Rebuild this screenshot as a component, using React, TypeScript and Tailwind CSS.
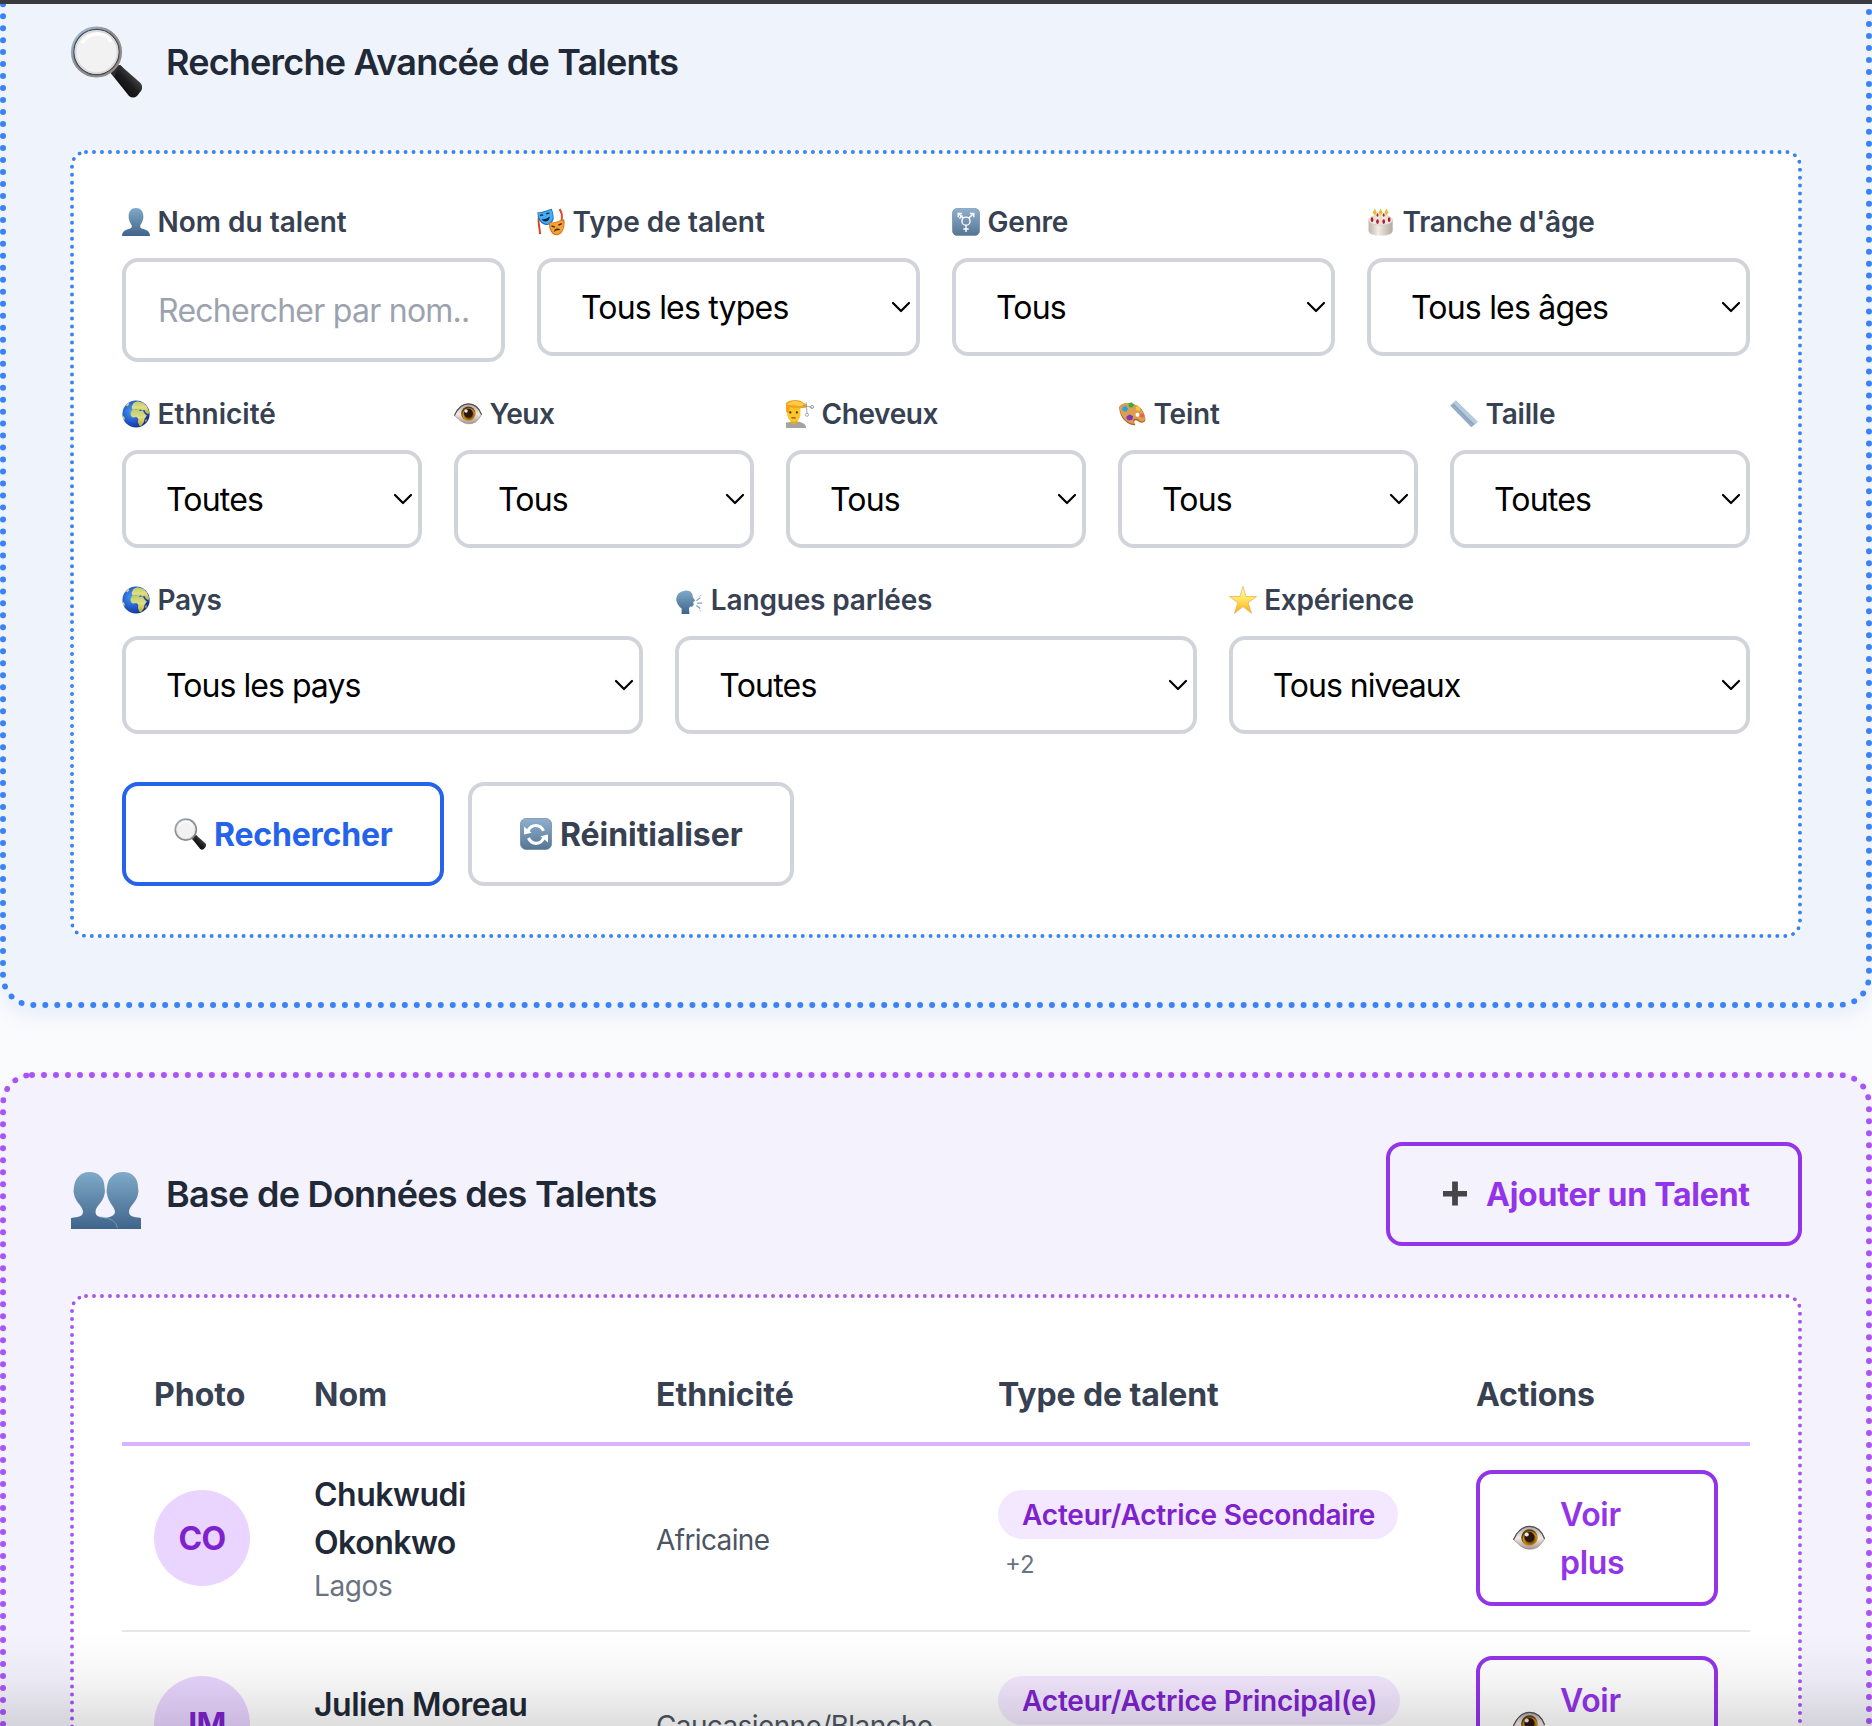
import React, { useId } from "react";

type P = { size: number; className?: string };

function Svg({ size, className = "", children }: P & { children: React.ReactNode }) {
  return (
    <svg width={size} height={size} viewBox="0 0 72 72" className={"shrink-0 " + className} aria-hidden="true">
      {children}
    </svg>
  );
}

function Magnifier({ size }: P) {
  const id = useId();
  return (
    <Svg size={size}>
      <defs>
        <linearGradient id={id + "h"} x1="0" y1="1" x2="1" y2="0">
          <stop offset="0" stopColor="#000" />
          <stop offset=".5" stopColor="#1c1c1e" />
          <stop offset="1" stopColor="#77777a" />
        </linearGradient>
        <linearGradient id={id + "r"} x1="0" y1="0" x2="1" y2="1">
          <stop offset="0" stopColor="#a5c6e6" />
          <stop offset=".45" stopColor="#8a8d91" />
          <stop offset="1" stopColor="#9a8d82" />
        </linearGradient>
      </defs>
      <path d="M41 47.500q1-7 9-8.500l20.500 18q3 3.500.5 8l-4 5q-4 3-8 0z" fill={"url(#" + id + "h)"} />
      <path d="M41 47.500q1-7 9-8.500l3 2.500q-7 2-8.500 9z" fill="#2d2d2f" />
      <circle cx="26.500" cy="26" r="24.300" fill="none" stroke={"url(#" + id + "r)"} strokeWidth="2.600" />
      <circle cx="26.500" cy="26" r="22.600" fill="#f2f2f3" stroke="#4c4d50" strokeWidth="1.500" />
      <circle cx="26.500" cy="26" r="21" fill="none" stroke="#d9dbde" strokeWidth="1.800" />
      <path d="M12 17Q18 8 28 8t13 8" fill="none" stroke="#fff" strokeWidth="3" />
    </Svg>
  );
}

function BustGradient({ id }: { id: string }) {
  return (
    <defs>
      <linearGradient id={id} x1="0" y1="0" x2="0" y2="1">
        <stop offset="0" stopColor="#7faac9" />
        <stop offset="1" stopColor="#40648a" />
      </linearGradient>
    </defs>
  );
}

function Bust({ size }: P) {
  const id = useId();
  return (
    <Svg size={size}>
      <BustGradient id={id} />
      <path d="M36 0c12 0 19 9 19 21 0 12-5 17-8 24-1 5 1 7 8 9 11 3 17 8 17 18H0c0-10 6-15 17-18 7-2 9-4 8-9-3-7-8-12-8-24C17 9 24 0 36 0z" fill={"url(#" + id + ")"} />
    </Svg>
  );
}

function Busts({ size }: P) {
  const id = useId();
  return (
    <Svg size={size}>
      <BustGradient id={id} />
      <g transform="translate(0 6)">
        <path d="M53 8c9 0 15 6 15 15 0 2 1 4 0 7-1 8-9 12-9 18 0 4 4 5 12 6v11H36V54c5-1 9-3 9-6 0-5-7-10-8-18-1-3 0-5 0-7C38 14 44 8 53 8z" fill={"url(#" + id + ")"} />
        <path d="M19.500 8c9 0 15 6 15 15 0 2 1 4 0 7-1 8-9 12-9 18 0 4 4 5 9 6 8 2 12 5 13 11H1V54c8-1 12-2 12-6 0-6-8-10-9-18-1-3 0-5 0-7C5 14 11 8 19.500 8z" fill={"url(#" + id + ")"} />
        <path d="M30 53q16 1 17.500 11" fill="none" stroke="#7ba5c5" strokeWidth=".8" />
      </g>
    </Svg>
  );
}

function Masks({ size }: P) {
  return (
    <Svg size={size}>
      <path d="M5 20q-2 12 0 24t3 23" fill="none" stroke="#d8401f" strokeWidth="5" />
      <path d="M58 3q7 10 6 22t-2 16" fill="none" stroke="#e2492c" strokeWidth="5" />
      <path d="M1 10q9 2 19-2T38 2q5 12 5 24 0 12-15 18-14 0-22-12Q1 23 1 10z" fill="#1a73c2" />
      <path d="M3 12q9 2 18-2t16-5q4 10 3.500 21Q38 36 27 41 15 40 9 31 3 23 3 12z" fill="#46aef0" />
      <path d="M8 20q4-4 8-1M24 16q4-4 8-2" fill="none" stroke="#10243f" strokeWidth="3" />
      <path d="M12 28q10 3 21-6-1 11-10 13-8 0-11-7z" fill="#10243f" />
      <path d="M31 36q11 3 20-1t19-6q3 15-3 28-5 12-16 13-11 0-16-11-5-9-4-23z" fill="#c96a10" />
      <path d="M33 38q10 2 18-2t17-4q3 12-2 24-5 10-14 12-10 0-15-11-5-8-4-19z" fill="#f3a136" />
      <path d="M37 46l9 3M55 44l9-4" stroke="#4b2208" strokeWidth="3.500" />
      <path d="M43 62q2-8 8-9 7-1 9 4-9-2-17 5z" fill="#4b2208" />
    </Svg>
  );
}

function TileGradient({ id }: { id: string }) {
  return (
    <defs>
      <linearGradient id={id} x1="0" y1="0" x2="0" y2="1">
        <stop offset="0" stopColor="#8fb0ce" />
        <stop offset="1" stopColor="#557593" />
      </linearGradient>
    </defs>
  );
}

function Gender({ size }: P) {
  const id = useId();
  return (
    <Svg size={size}>
      <TileGradient id={id} />
      <rect x="1" y="1" width="70" height="70" rx="13" fill={"url(#" + id + ")"} stroke="#5f7f9c" strokeWidth="1.500" />
      <g fill="none" stroke="#fff" strokeWidth="3.600">
        <circle cx="36" cy="34" r="10.500" />
        <path d="M36 45v17M29 54h14M43 26l12-11M46 14h10v10M29 26L17 15M26 14H16v10M19 27l8-8" />
      </g>
    </Svg>
  );
}

function Refresh({ size }: P) {
  const id = useId();
  return (
    <Svg size={size}>
      <TileGradient id={id} />
      <rect x="1" y="1" width="70" height="70" rx="13" fill={"url(#" + id + ")"} stroke="#5f7f9c" strokeWidth="1.500" />
      <g fill="none" stroke="#fff" strokeWidth="7">
        <path d="M18 30Q22 17 36 17q11 0 17 12" />
        <path d="M54 42Q50 57 36 57q-11 0-17-12" />
      </g>
      <path d="M9 37V19l17 14zM63 37v18L46 41z" fill="#fff" />
    </Svg>
  );
}

function Cake({ size }: P) {
  const id = useId();
  return (
    <Svg size={size}>
      <defs>
        <linearGradient id={id} x1="0" y1="0" x2="1" y2="0">
          <stop offset="0" stopColor="#bdb4aa" />
          <stop offset=".4" stopColor="#f1ece6" />
          <stop offset="1" stopColor="#b3a99e" />
        </linearGradient>
      </defs>
      <path d="M4 31v28q2 12 31 12t31-12V31z" fill={"url(#" + id + ")"} />
      <ellipse cx="35" cy="31" rx="31" ry="13" fill="#efe9e2" stroke="#cfc6bb" strokeWidth="1.500" />
      <path d="M20 12v20M35 12v26M50 12v20" stroke="#e9dfc2" strokeWidth="6" />
      <path d="M20 1l5.500 11-5.500 6-5.500-6zM35 1l5.500 11-5.500 6-5.500-6zM50 1l5.500 11-5.500 6-5.500-6z" fill="#e3c033" />
      <g fill="#b81636">
        <ellipse cx="13" cy="30" rx="3.500" ry="6" /><ellipse cx="27" cy="35" rx="3.500" ry="6" /><ellipse cx="43" cy="35" rx="3.500" ry="6" /><ellipse cx="57" cy="30" rx="3.500" ry="6" /><ellipse cx="27" cy="18" rx="2.500" ry="4.500" /><ellipse cx="43" cy="18" rx="2.500" ry="4.500" />
      </g>
    </Svg>
  );
}

function Globe({ size }: P) {
  const id = useId();
  return (
    <Svg size={size}>
      <defs>
        <radialGradient id={id} cx=".35" cy=".4" r=".7">
          <stop offset="0" stopColor="#4c9bf0" />
          <stop offset=".55" stopColor="#2358cc" />
          <stop offset="1" stopColor="#122a80" />
        </radialGradient>
        <linearGradient id={id + "l"} x1="0" y1="0" x2="0" y2="1">
          <stop offset="0" stopColor="#b9cf6b" />
          <stop offset=".5" stopColor="#e3dd83" />
          <stop offset="1" stopColor="#b0ae2f" />
        </linearGradient>
      </defs>
      <circle cx="36" cy="36" r="35" fill={"url(#" + id + ")"} />
      <g fill={"url(#" + id + "l)"}>
        <path d="M25 17l5-10 10-4 14 4 10 9 6 15-2 6-7-5-3-6-6 1-5-3-5 3-6-4-5 3-5-2z" />
        <path d="M22 35l3-8 7-3 9 1 5 3 7-1 6 9 5 4-6 8-2 9-6 9-5 1-4-10 1-9-5-4-9 1-5-4z" />
        <path d="M1 39q5 2 6 8l-1 6Q1 46 1 39zM60 52l3-4v7l-3 3z" />
        <path d="M10 14l6-6 3 2-5 7z" />
      </g>
    </Svg>
  );
}

function Eye({ size }: P) {
  const id = useId();
  return (
    <Svg size={size}>
      <defs>
        <linearGradient id={id} x1="0" y1="0" x2="0" y2="1">
          <stop offset="0" stopColor="#a9a3ad" />
          <stop offset=".5" stopColor="#f1ebea" />
          <stop offset="1" stopColor="#a8938f" />
        </linearGradient>
        <radialGradient id={id + "i"} cx=".55" cy=".6" r=".52">
          <stop offset=".35" stopColor="#6b430f" />
          <stop offset=".8" stopColor="#cf9410" />
          <stop offset="1" stopColor="#5b3c0c" />
        </radialGradient>
      </defs>
      <path d="M1 40Q14 10 37 10q24 0 34 28-9 14-16 19-20 10-38-3Q8 45 1 40z" fill={"url(#" + id + ")"} stroke="#8f8482" strokeWidth="1.500" />
      <path d="M1 40Q14 10 37 10q24 0 34 28" fill="none" stroke="#55504f" strokeWidth="2.800" />
      <circle cx="37" cy="35" r="18.500" fill={"url(#" + id + "i)"} />
      <circle cx="37" cy="34" r="11.500" fill="#2a1512" />
      <circle cx="31" cy="28" r="4.500" fill="#efe8e8" />
    </Svg>
  );
}

function Haircut({ size }: P) {
  return (
    <Svg size={size}>
      <path d="M0 72V58q8 0 14-2h20q17 4 18 16z" fill="#a3a3a5" />
      <path d="M12 50h18v9q-9 7-18 1z" fill="#e9a81d" />
      <path d="M3 19h34v20q-3 16-17 17Q6 54 3 39z" fill="#fcc52c" />
      <path d="M0 30V8Q8 0 24 0q14 0 22 8l6 3-1 9-14 1q-16 1-26-2-4 6-5 15z" fill="#f5a21c" />
      <path d="M2 12Q12 1 28 3q12 1 20 9l-8 4q-20-3-38-4z" fill="#ffcb47" />
      <circle cx="11" cy="32" r="2.800" fill="#4a2c10" /><circle cx="28" cy="32" r="2.800" fill="#4a2c10" />
      <path d="M14 46h11" stroke="#8b4a15" strokeWidth="3" />
      <path d="M42 14l26 5M52 6l2 28" stroke="#8b8f94" strokeWidth="2" />
      <g fill="none" stroke="#8b8f94" strokeWidth="2"><circle cx="67" cy="18" r="4" /><circle cx="54" cy="38" r="4" /></g>
    </Svg>
  );
}

function Palette({ size }: P) {
  return (
    <Svg size={size}>
      <path d="M3 18Q14 4 39 10t31 36q2 10-6 12-8 2-13-4-6-4-9 0-2 4 3 11-15 1-28-12T3 18z" fill="#a9672b" />
      <path d="M4 16Q14 4 38 10t31 34q2 9-5 11-7 2-12-5-7-5-12 0-3 4 2 11-13 1-25-12T4 16z" fill="#dc9f52" />
      <circle cx="50" cy="38" r="5" fill="#fff" />
      <path d="M12 18l8-3 6 7-4 8-8-1-3-5z" fill="#22a3e2" />
      <path d="M27 9l8-3 7 7-6 7-8-2z" fill="#39ad3c" />
      <path d="M46 17l7-1 5 6-3 6-8-2z" fill="#f2cf27" />
      <ellipse cx="62" cy="40" rx="6" ry="5.500" fill="#f0604f" />
      <path d="M22 42l8-5 9 5-2 9-9 2-6-4z" fill="#8531ba" />
    </Svg>
  );
}

function Ruler({ size }: P) {
  return (
    <Svg size={size}>
      <path d="M15 1L1 15l54 55 16-14z" fill="#8ca6bf" />
      <path d="M15 1L8 8l56 55 7-7z" fill="#b5cadd" />
      <path d="M4 12l54 55" stroke="#a9bfd3" strokeWidth="2" />
    </Svg>
  );
}

function Speaking({ size }: P) {
  const id = useId();
  return (
    <Svg size={size}>
      <BustGradient id={id} />
      <path d="M25 12c14-2 21 6 21 17l6 9-5 3 1 7q-1 6-9 5l-3 4 1 15H17V58Q4 48 3 34 4 15 25 12z" fill={"url(#" + id + ")"} />
      <path d="M55 38l10-8M57 44h13M55 50l10 8" stroke="#7d9fbd" strokeWidth="3" />
      <path d="M62 27l6-4M62 61l6 5" stroke="#9cb6cc" strokeWidth="2" />
    </Svg>
  );
}

function Star({ size }: P) {
  const id = useId();
  return (
    <Svg size={size}>
      <defs>
        <linearGradient id={id} x1="0" y1="0" x2="0" y2="1">
          <stop offset="0" stopColor="#fffbe0" />
          <stop offset=".5" stopColor="#ffe45c" />
          <stop offset="1" stopColor="#f7a81b" />
        </linearGradient>
      </defs>
      <path d="M36 1l8 26h27L49 43l9 27-22-17-22 17 9-27L1 27h27z" fill={"url(#" + id + ")"} stroke="#eeb04a" strokeWidth="2" strokeLinejoin="round" />
    </Svg>
  );
}

function Plus({ size }: P) {
  return (
    <Svg size={size}>
      <path d="M29.500 8h13v21.500H63v12H42.500V62h-13V41.500H9v-12h20.500z" fill="#464547" />
    </Svg>
  );
}

type Icon = (p: P) => React.ReactElement;

function Label({ icon: I, text, track }: { icon: Icon; text: string; track: string }) {
  return (
    <div className="mb-4 flex h-10 items-center gap-[7.500px]">
      <I size={28} />
      <span className={"whitespace-nowrap text-[28px] leading-10 font-semibold text-[#374151] " + track}>{text}</span>
    </div>
  );
}

function Select({ icon, label, value, lt = "", vt = "tracking-[-0.8px]" }: { icon: Icon; label: string; value: string; lt?: string; vt?: string }) {
  return (
    <div>
      <Label icon={icon} text={label} track={lt} />
      <div className="flex h-[98px] items-center justify-between rounded-2xl border-4 border-[#d1d5db] bg-white pr-[5px] pl-10">
        <span className={"pt-0.5 text-[32px] leading-[48px] text-black " + vt}>{value}</span>
        <svg width="20" height="20" viewBox="0 0 20 20" fill="none" stroke="#000" strokeWidth="2.200" strokeLinecap="round" strokeLinejoin="round">
          <path d="M2 6l8 8 8-8" />
        </svg>
      </div>
    </div>
  );
}

function Row({ initials, name, city, origin, role, more }: { initials: string; name: string; city: string; origin: string; role: string; more: string }) {
  return (
    <div className="grid h-[186px] grid-cols-[160px_342px_342px_478px_306px] items-center border-b-2 border-[#e5e7eb]">
      <div className="px-8">
        <div className="flex size-24 items-center justify-center rounded-full bg-[#e9d5ff] pt-0.5 text-[32px] font-bold tracking-[-0.02em] text-[#7e22ce]">{initials}</div>
      </div>
      <div className="px-8">
        <div className="w-[240px] text-[32px] leading-[48px] font-semibold tracking-[-0.015em] text-[#1f2937]">{name}</div>
        <div className="text-[28px] leading-[38px] tracking-[-0.4px] text-[#6b7280]">{city}</div>
      </div>
      <div className="px-8 pt-1 text-[28px] leading-10 tracking-[-0.62px] whitespace-nowrap text-[#4b5563]">{origin}</div>
      <div className="px-8">
        <div className="flex">
          <span className="flex h-[49px] items-center rounded-full bg-[#f3e8ff] pr-[23px] pl-6 text-[28px] font-semibold tracking-[-0.18px] whitespace-nowrap text-[#7e22ce]">{role}</span>
        </div>
        <div className="mt-[5px] ml-[7px] text-2xl leading-[42px] text-[#6b7280]">{more}</div>
      </div>
      <div className="px-8">
        <div className="flex h-[136px] items-center gap-[15px] rounded-2xl border-4 border-[#9333ea] pl-[33px]">
          <Eye size={32} />
          <span className="w-[80px] pt-0.5 text-[32px] leading-[48px] font-semibold tracking-[-0.3px] text-[#9333ea]">Voir plus</span>
        </div>
      </div>
    </div>
  );
}

export default function App() {
  return (
    <div className="relative h-[1726px] w-[1872px] overflow-hidden bg-[#fafbfc] font-[Inter,sans-serif]">
      <section className="-mt-12 h-[1056px] rounded-[32px] border-[6px] border-dotted border-[#3b82f6] bg-[#eff3fb] px-16 pt-16 shadow-[0_8px_20px_rgba(59,130,246,0.1)]">
        <div className="flex h-20 items-center gap-6">
          <Magnifier size={72} />
          <h2 className="text-4xl font-semibold tracking-[-0.81px] whitespace-nowrap text-[#1f2937]">Recherche Avancée de Talents</h2>
        </div>
        <div className="mt-12 rounded-2xl border-4 border-dotted border-[#3b82f6] bg-white p-12">
          <div className="grid grid-cols-4 gap-8">
            <div>
              <Label icon={Bust} text="Nom du talent" track="" />
              <div className="flex h-[104px] items-center overflow-hidden rounded-2xl border-4 border-[#d1d5db] px-8 pt-0.5 text-[32px] tracking-[-0.75px] whitespace-nowrap text-[#9ca3af]">Rechercher par nom..</div>
            </div>
            <Select icon={Masks} label="Type de talent" value="Tous les types" />
            <Select icon={Gender} label="Genre" value="Tous" lt="tracking-[-0.2px]" />
            <Select icon={Cake} label="Tranche d'âge" value="Tous les âges" lt="tracking-[-0.2px]" />
          </div>
          <div className="mt-8 grid grid-cols-5 gap-8">
            <Select icon={Globe} label="Ethnicité" value="Toutes" />
            <Select icon={Eye} label="Yeux" value="Tous" lt="tracking-[-0.5px]" />
            <Select icon={Haircut} label="Cheveux" value="Tous" lt="tracking-[-0.4px]" />
            <Select icon={Palette} label="Teint" value="Tous" lt="tracking-[-0.2px]" />
            <Select icon={Ruler} label="Taille" value="Toutes" lt="tracking-[-0.2px]" />
          </div>
          <div className="mt-8 grid grid-cols-3 gap-8">
            <Select icon={Globe} label="Pays" value="Tous les pays" lt="tracking-[-0.3px]" vt="tracking-[-0.95px]" />
            <Select icon={Speaking} label="Langues parlées" value="Toutes" lt="tracking-[-0.16px]" />
            <Select icon={Star} label="Expérience" value="Tous niveaux" lt="tracking-[-0.24px]" vt="tracking-[-1px]" />
          </div>
          <div className="mt-12 flex gap-6">
            <button className="flex h-[104px] w-[322px] items-center gap-2 rounded-2xl border-4 border-[#2563eb] px-12 text-[32px] font-bold text-[#2563eb]">
              <Magnifier size={32} />
              <span className="pt-0.5 tracking-[-0.2px]">Rechercher</span>
            </button>
            <button className="flex h-[104px] w-[326px] items-center gap-2 rounded-2xl border-4 border-[#d1d5db] px-12 text-[32px] font-bold text-[#374151]">
              <Refresh size={32} />
              <span className="pt-0.5 tracking-[-0.05px]">Réinitialiser</span>
            </button>
          </div>
        </div>
      </section>

      <section className="mt-16 h-[1100px] rounded-[32px] border-[6px] border-dotted border-[#a855f7] bg-[#f4f2fc] px-16 pt-16">
        <div className="flex h-[104px] items-center justify-between">
          <div className="flex items-center gap-6">
            <Busts size={72} />
            <h2 className="text-4xl font-semibold tracking-[-0.02em] whitespace-nowrap text-[#1f2937]">Base de Données des Talents</h2>
          </div>
          <button className="flex h-[104px] w-[416px] items-center gap-[15px] rounded-2xl border-4 border-[#9333ea] pl-[49px] text-[32px] font-bold whitespace-nowrap text-[#9333ea]">
            <Plus size={32} />
            <span className="pt-0.5 tracking-[-0.22px]">Ajouter un Talent</span>
          </button>
        </div>
        <div className="mt-12 h-[900px] rounded-2xl border-4 border-dotted border-[#a855f7] bg-white p-12">
          <div className="grid h-[100px] grid-cols-[160px_342px_342px_478px_306px] items-center border-b-4 border-[#d8b4fe] pt-0.5 text-[32px] font-bold text-[#374151]">
            <div className="px-8">Photo</div>
            <div className="px-8">Nom</div>
            <div className="px-8">Ethnicité</div>
            <div className="px-8 tracking-[-0.1px]">Type de talent</div>
            <div className="px-8 tracking-[-0.15px]">Actions</div>
          </div>
          <Row initials="CO" name="Chukwudi Okonkwo" city="Lagos" origin="Africaine" role="Acteur/Actrice Secondaire" more="+2" />
          <Row initials="JM" name="Julien Moreau" city="Paris" origin="Caucasienne/Blanche" role="Acteur/Actrice Principal(e)" more="+2" />
        </div>
      </section>

      <div className="absolute inset-x-0 top-0 h-1 bg-[#3a3b40]" />
      <div className="pointer-events-none absolute inset-x-0 bottom-0 h-[92px] bg-linear-to-b from-transparent via-black/4 to-black/13" />
    </div>
  );
}
